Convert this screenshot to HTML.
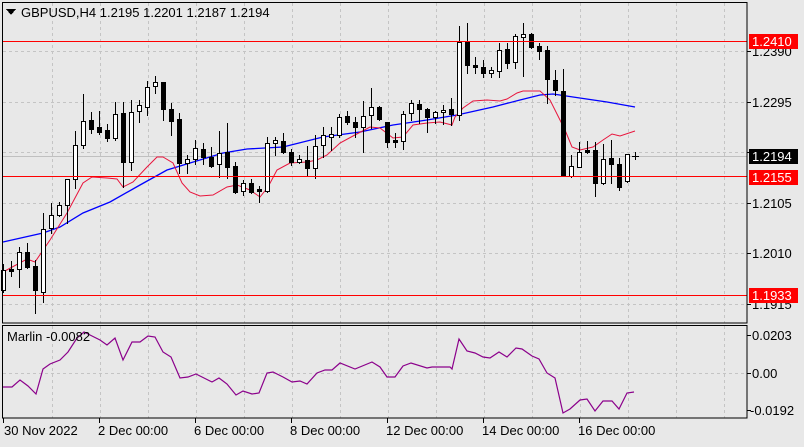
<!DOCTYPE html>
<html><head><meta charset="utf-8"><style>
html,body{margin:0;padding:0;background:#e8e8e8;}
body{width:804px;height:442px;overflow:hidden;font-family:"Liberation Sans",sans-serif;}
svg text{font-family:"Liberation Sans",sans-serif;font-size:13px;}
</style></head><body>
<svg id="s" width="804" height="442" xmlns="http://www.w3.org/2000/svg" shape-rendering="crispEdges">
<rect width="804" height="442" fill="#e8e8e8"/>
<g id="grid" stroke="#c4c4c4" stroke-dasharray="3,3" stroke-width="1"></g>
<line x1="2" y1="156.5" x2="747" y2="156.5" stroke="#c0c0c0"/>
<g id="lines" fill="none" shape-rendering="auto"></g>
<g id="candles"></g>
<line x1="2" y1="41.5" x2="747" y2="41.5" stroke="#ff0000"/>
<line x1="2" y1="176.5" x2="747" y2="176.5" stroke="#ff0000"/>
<line x1="2" y1="295.5" x2="747" y2="295.5" stroke="#ff0000"/>
<rect x="2.5" y="2.5" width="744.5" height="320.5" fill="none" stroke="#000"/>
<rect x="2.5" y="325.5" width="744.5" height="92.5" fill="none" stroke="#000"/>
<g id="ticks" stroke="#000"></g>
<polygon points="6,9 16,9 11,15" fill="#000"/>
<text x="21" y="17" fill="#000">GBPUSD,H4  1.2195 1.2201 1.2187 1.2194</text>
<text x="7" y="341" fill="#000">Marlin -0.0082</text>
<g fill="#000">
<text x="752" y="56">1.2390</text>
<text x="752" y="107">1.2295</text>
<text x="752" y="208">1.2105</text>
<text x="752" y="258">1.2010</text>
<text x="752" y="309">1.1915</text>
<text x="752" y="340">0.0203</text>
<text x="752" y="378">0.00</text>
<text x="750" y="415">-0.0192</text>
<text x="4" y="435">30 Nov 2022</text>
<text x="98" y="435">2 Dec 00:00</text>
<text x="194" y="435">6 Dec 00:00</text>
<text x="290" y="435">8 Dec 00:00</text>
<text x="386" y="435">12 Dec 00:00</text>
<text x="482" y="435">14 Dec 00:00</text>
<text x="578" y="435">16 Dec 00:00</text>
</g>
<rect x="749" y="34" width="49" height="15" fill="#ff0000"/>
<text x="752" y="46" fill="#fff">1.2410</text>
<rect x="749" y="149" width="49" height="15" fill="#000"/>
<text x="752" y="161" fill="#fff">1.2194</text>
<rect x="749" y="170" width="49" height="15" fill="#ff0000"/>
<text x="752" y="182" fill="#fff">1.2155</text>
<rect x="749" y="288" width="49" height="15" fill="#ff0000"/>
<text x="752" y="300" fill="#fff">1.1933</text>
</svg>
<script>
var NS="http://www.w3.org/2000/svg";
function el(p,n,a){var e=document.createElementNS(NS,n);for(var k in a)e.setAttribute(k,a[k]);p.appendChild(e);return e;}
var g=document.getElementById('grid');
for(var x=52;x<747;x+=48){el(g,'line',{x1:x+.5,y1:3,x2:x+.5,y2:323});el(g,'line',{x1:x+.5,y1:326,x2:x+.5,y2:418});}
[51,102,152,203,253,304].forEach(function(y){el(g,'line',{x1:3,y1:y+.5,x2:747,y2:y+.5});});
el(g,'line',{x1:3,y1:373.5,x2:747,y2:373.5});
var t=document.getElementById('ticks');
[51,102,152,203,253,304,335,373,410].forEach(function(y){el(t,'line',{x1:747,y1:y+.5,x2:751,y2:y+.5});});
[3,99,195,291,387,483,579].forEach(function(x){el(t,'line',{x1:x+.5,y1:418,x2:x+.5,y2:423});});
var L=document.getElementById('lines');
el(L,'polyline',{stroke:'#0000ff','stroke-width':1.3,points:"3,242 43,233 60,227 83,213 110,202 140,185 167,170 190,163 223,153 247,149 283,147 323,137 360,132 393,125 427,120 457,115 493,107 520,100 540,95 553,94 573,97 607,102 635,107"});
el(L,'polyline',{stroke:'#e8143c','stroke-width':1,points:"3,272 27,259 35,262 50,240 67,213 83,183 92,177 107,178 117,179 123,187 133,182 147,167 157,157 163,157 173,163 182,183 190,192 200,196 213,195 227,187 237,185 250,190 260,197 268,187 277,170 290,163 307,162 317,160 327,155 340,143 353,136 370,127 380,128 393,138 403,137 413,125 427,123 440,122 452,125 455,117 463,108 473,101 487,100 500,101 507,99 517,93 523,91 540,91 550,100 559,118 565,130 572,147 580,150 593,147 603,140 612,134 620,136 635,131"});
el(L,'polyline',{stroke:'#8b008b','stroke-width':1.2,points:"3,387 12,387 20,380 28,386 36,394 43,369 50,364 60,360 68,352 77,338 84,332 92,336 100,340 107,345 115,338 123,360 132,342 140,342 148,336 155,337 163,352 171,357 180,378 188,377 196,374 204,378 212,382 219,378 227,384 236,395 243,391 252,394 259,393 267,373 273,372 283,377 292,382 300,381 307,384 317,373 325,370 332,370 340,363 355,369 372,362 380,367 387,377 395,377 403,366 411,363 427,368 432,367 450,367 452,369 459,339 467,351 475,353 483,357 490,358 499,352 507,357 516,348 522,349 532,356 539,359 547,373 555,378 563,413 570,409 580,400 587,399 595,411 603,401 612,401 619,409 627,393 634,392"});
var C=[[3,264,270,290,292,1],[11,261,269,271,276,0],[19,247,252,269,287,1],[27,243,252,267,268,0],[35,260,266,290,313,0],[43,213,229,292,302,1],[51,203,215,228,233,1],[59,202,205,215,216,1],[67,179,179,205,223,1],[75,131,145,179,188,1],[83,94,121,145,148,1],[91,112,120,129,133,0],[99,111,127,132,134,0],[107,124,130,138,141,0],[115,102,114,138,140,1],[123,102,113,162,187,0],[131,100,112,162,170,1],[139,100,105,111,122,1],[147,81,87,107,115,1],[155,76,82,86,93,1],[163,82,82,109,120,0],[171,103,109,121,135,0],[179,113,119,163,173,0],[187,155,159,163,173,1],[195,140,148,159,164,1],[203,143,149,157,164,0],[211,147,157,166,167,0],[219,131,153,164,177,1],[227,123,152,167,178,0],[235,162,166,192,193,0],[243,180,183,191,195,1],[251,179,183,192,193,0],[259,186,189,191,202,0],[267,137,143,191,192,1],[275,137,140,143,155,1],[283,133,141,152,153,0],[291,149,152,162,165,0],[299,155,159,162,163,1],[307,146,160,168,175,0],[315,135,146,168,178,1],[323,127,135,145,157,1],[331,127,134,137,150,1],[339,114,117,135,137,1],[347,111,116,122,124,0],[355,117,122,127,137,0],[363,101,116,127,152,1],[371,88,107,115,128,1],[379,106,107,119,120,0],[387,122,122,142,147,0],[395,133,140,142,147,0],[403,111,114,141,149,1],[411,100,103,113,120,1],[419,100,104,109,123,0],[427,108,109,117,132,0],[435,111,112,117,123,1],[443,105,110,112,124,1],[451,98,109,114,125,0],[459,26,42,115,120,1],[467,23,42,65,73,0],[475,57,65,67,73,0],[483,60,67,73,77,0],[491,67,70,73,77,1],[499,43,50,71,77,1],[507,43,49,63,68,0],[515,34,36,62,68,1],[523,23,34,37,76,1],[531,33,34,47,48,0],[539,43,46,51,59,0],[547,46,50,79,103,0],[555,70,80,90,95,0],[563,69,91,176,176,0],[571,155,166,176,177,1],[579,142,152,167,167,1],[587,141,150,152,153,0],[595,142,150,183,196,0],[603,144,159,183,184,1],[611,140,158,164,183,0],[619,158,164,187,190,0],[627,154,154,181,182,1]];
var cg=document.getElementById('candles');
C.forEach(function(c){var x=c[0];
el(cg,'line',{x1:x+.5,y1:c[1],x2:x+.5,y2:c[4]+1,stroke:'#000'});
var h=Math.max(1,c[3]-c[2]);
if(c[5])el(cg,'rect',{x:x-2+.5,y:c[2]+.5,width:4,height:h,fill:'#fff',stroke:'#000'});
else el(cg,'rect',{x:x-2,y:c[2],width:5,height:h+1,fill:'#000'});
});
el(cg,'line',{x1:632,y1:156.5,x2:639,y2:156.5,stroke:'#000'});
el(cg,'line',{x1:635.5,y1:152,x2:635.5,y2:160,stroke:'#000'});
</script>
</body></html>
